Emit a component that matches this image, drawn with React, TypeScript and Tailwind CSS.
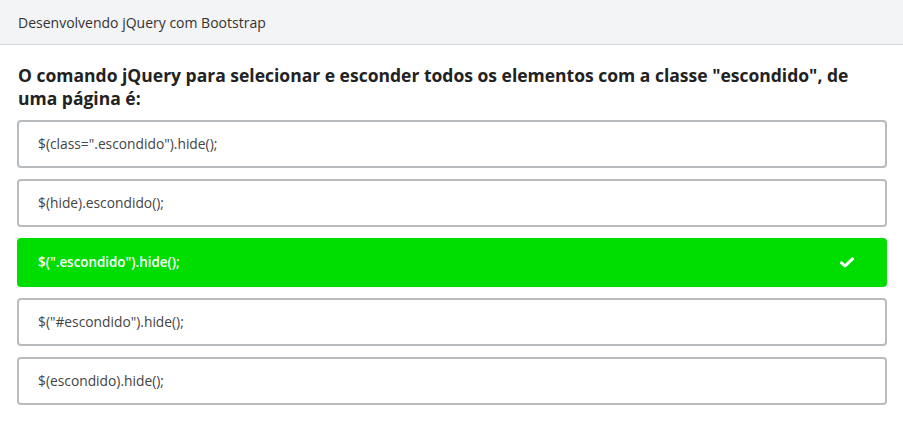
const options = [
  { text: '$(class=".escondido").hide();', correct: false },
  { text: "$(hide).escondido();", correct: false },
  { text: '$(".escondido").hide();', correct: true },
  { text: '$("#escondido").hide();', correct: false },
  { text: "$(escondido).hide();", correct: false },
];

function CheckIcon() {
  return (
    <svg width="14" height="11" viewBox="0 0 14 11" aria-hidden="true">
      <path
        d="M1.5 5.8 L5 9 L12.5 1.8"
        fill="none"
        stroke="white"
        strokeWidth="3"
        strokeLinecap="round"
        strokeLinejoin="round"
      />
    </svg>
  );
}

export default function App() {
  return (
    <div className="min-h-[429px] w-[903px] bg-white font-['Open_Sans',sans-serif]">
      <div className="flex h-[45px] items-center border-b border-[#d4d5d7] bg-[#f3f4f5] px-[18px] text-[14px] text-[#333]">
        Desenvolvendo jQuery com Bootstrap
      </div>

      <div className="px-[17px] pt-[19px]">
        <h1 className="pl-px text-[17.5px] font-bold leading-[23px] text-[#222]">
          O comando jQuery para selecionar e esconder todos os elementos com a classe "escondido", de
          uma página é:
        </h1>

        <div className="mt-[10px] flex w-[870px] flex-col gap-[11px]">
          {options.map((o) =>
            o.correct ? (
              <div
                key={o.text}
                className="flex h-[49px] items-center justify-between rounded-[4px] bg-[#00dd00] pl-[21px] pr-[33px] text-[13.4px] font-semibold text-white"
              >
                <span>{o.text}</span>
                <CheckIcon />
              </div>
            ) : (
              <div
                key={o.text}
                className="flex h-[48px] items-center rounded-[4px] border-2 border-[#b9bcbf] pl-[19px] text-[13.8px] text-[#444]"
              >
                {o.text}
              </div>
            ),
          )}
        </div>
      </div>
    </div>
  );
}
